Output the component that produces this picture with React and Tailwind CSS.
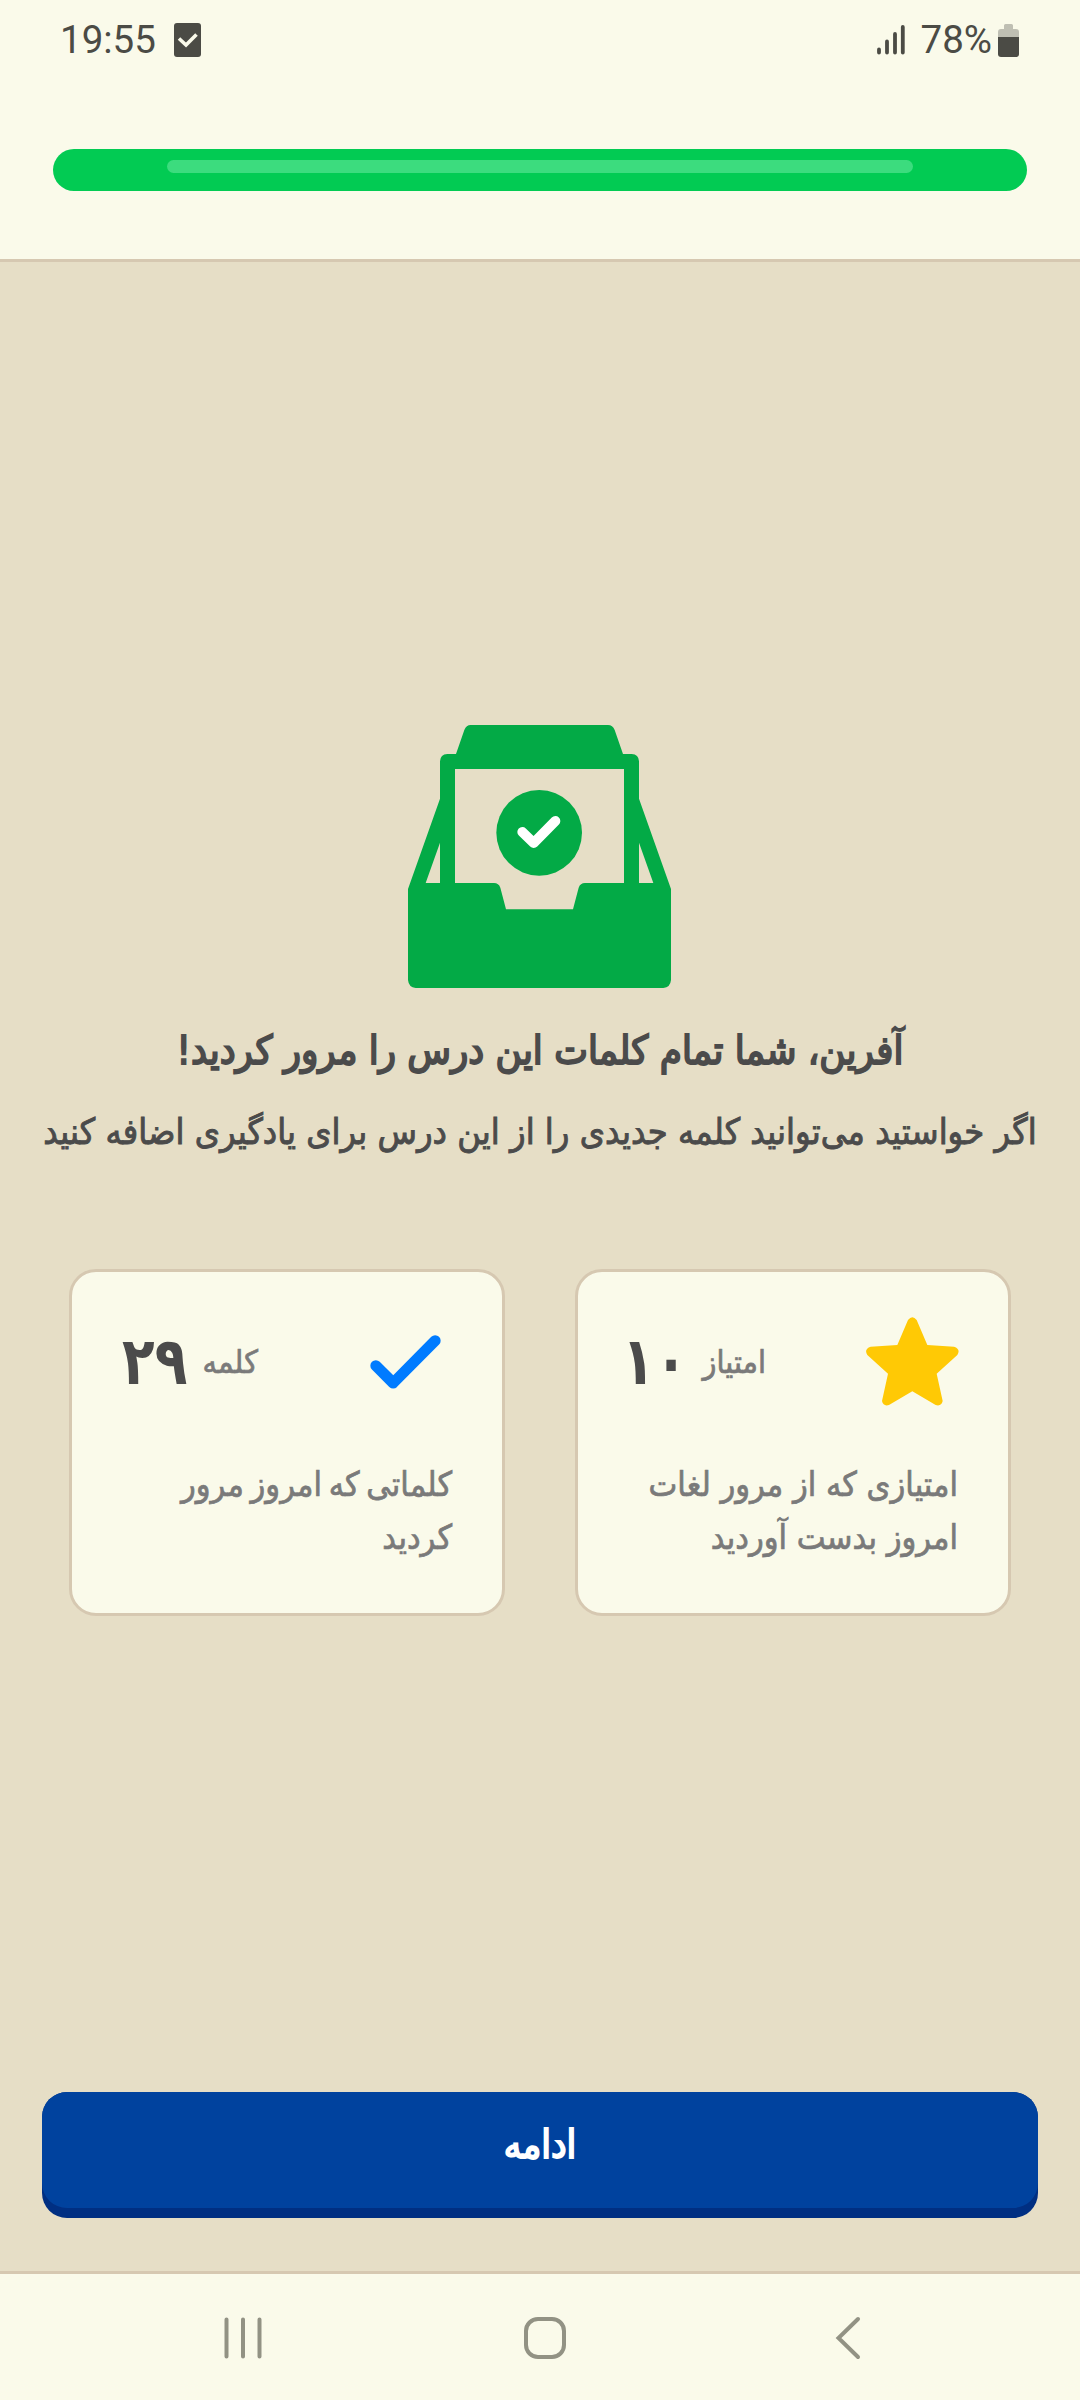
import React from 'react';

// Status bar and lesson progress
const Header = () => {
  return (
    <header className="h-[262px] border-b-[3px] border-[#d6c8b1] bg-[#fafaea]">
      <div className="h-[149px] flex items-start justify-between pl-[60px] pr-[61px] pt-[16px] text-[#4b4b45]">
        <div className="flex items-center gap-[18px]">
          <span className="text-[38.5px] leading-[48px]">19:55</span>
          <svg width="27" height="34" viewBox="0 0 27 34">
            <rect width="27" height="34" rx="3" fill="currentColor" />
            <path d="M5 15.5 L12 22 L22.5 11.5" fill="none" stroke="#fafaea" strokeWidth="3.6" />
          </svg>
        </div>
        <div className="flex items-center">
          <svg width="28" height="30" viewBox="0 0 28 30" className="mr-[16px]">
            <g stroke="currentColor" strokeWidth="3.8" strokeLinecap="round">
              <path d="M2 24.5V27.5M10 16.5V27.5M18 9V27.5M25.8 2V27.5" />
            </g>
          </svg>
          <span className="text-[38.5px] leading-[48px] mr-[6px]">78%</span>
          <svg width="21" height="33" viewBox="0 0 21 33">
            <path d="M6 1.5Q6 0 7.5 0h6Q15 0 15 1.5V5h3Q21 5 21 8v5H0V8Q0 5 3 5h3z" fill="#bfbfb3" />
            <path d="M0 13h21v17q0 3-3 3H3q-3 0-3-3z" fill="currentColor" />
          </svg>
        </div>
      </div>
      <div className="mx-[53px] h-[42px] rounded-full bg-[#02cb53] pt-[11px]">
        <div className="mx-[114px] h-[13px] rounded-full bg-[#3cdc7e]" />
      </div>
    </header>
  );
};

const TrayIcon = () => {
  return (
    <svg width="263" height="263" viewBox="54 45 789 789" className="mr-[1px]">
      <path
        fill="#03aa46"
        fillRule="evenodd"
        d="M242 45H654Q668 45 674 60L699 132H725Q746 133 747 154V266L843 537V810Q841 832 820 834H77Q56 832 54 810V537L150 266V154Q151 133 172 132H198L223 60Q229 45 242 45ZM195 177V519H312Q326 519 331 533L348 598H549L566 533Q571 519 585 519H702V177ZM150 398L107 519H150ZM747 398V519H790Z"
      />
      <circle cx="447.500" cy="368.500" r="128.500" fill="#03aa46" />
      <path d="M397 366L431 399L496 333" fill="none" stroke="#fff" strokeWidth="30" strokeLinecap="round" strokeLinejoin="round" />
    </svg>
  );
};

const StarIcon = () => {
  return (
    <svg width="93" height="89" viewBox="917 203 279 267" className="-mr-px -mt-[3px]">
      <path
        fill="#ffc905"
        d="M1043 212Q1056 196 1069 212L1101 287L1181 292Q1202 299 1191 317L1129 373L1147 455Q1143 472 1126 467L1056 426L986 467Q969 472 965 455L983 373L921 317Q910 299 931 292L1011 287Z"
      />
    </svg>
  );
};

const CheckIcon = () => {
  return (
    <svg width="71" height="54" viewBox="962 255 212 162" className="mr-[11px] -mt-[2px]">
      <path d="M979 347L1031 399L1157 272" fill="none" stroke="#007bff" strokeWidth="33" strokeLinecap="round" strokeLinejoin="round" />
    </svg>
  );
};

const StatCard = ({ icon, unit, value, valueClass, textClass, children }) => {
  return (
    <div className="w-[436px] h-[347px] rounded-[27px] border-[3px] border-[#d6c8b1] bg-[#fafaea] pt-[46px] pr-[50px] pl-[50px]">
      <div className="h-[90px] flex items-center justify-between">
        {icon}
        <div className="flex items-center gap-[8px]">
          <span className="text-[32px] leading-[60px] -mt-[3px] text-[#7a7a7a] [-webkit-text-stroke:0.7px]">{unit}</span>
          <span className={`-mt-[3px] text-[66px] leading-[60px] font-bold text-[#4b4b4b] origin-left scale-x-90 ${valueClass}`}>{value}</span>
        </div>
      </div>
      <p className={`mt-[50px] leading-[53px] text-[#7a7a7a] whitespace-nowrap [-webkit-text-stroke:0.7px] ${textClass}`}>{children}</p>
    </div>
  );
};

const NavBar = () => {
  return (
    <footer className="h-[129px] border-t-[3px] border-[#d6c8b1] bg-[#fafaea] flex items-start pt-[42px] pl-[223px]">
      <svg width="40" height="44" viewBox="0 0 40 44" className="mr-[259px]">
        <path d="M3.500 3.500V40.500M20 3.500V40.500M36.500 3.500V40.500" stroke="#929284" strokeWidth="4" strokeLinecap="round" />
      </svg>
      <svg width="44" height="44" viewBox="0 0 44 44" className="mr-[269px]">
        <rect x="4" y="3" width="38" height="38" rx="12" fill="none" stroke="#929284" strokeWidth="4" />
      </svg>
      <svg width="26" height="44" viewBox="0 0 26 44">
        <path d="M23 3L3.500 22L23 41" fill="none" stroke="#929284" strokeWidth="4" strokeLinecap="round" />
      </svg>
    </footer>
  );
};

const App = () => {
  return (
    <div className="w-[1080px] h-[2400px] flex flex-col overflow-hidden bg-[#e6dec6] font-[Roboto,'DejaVu_Sans',sans-serif]">
      <Header />
      <main dir="rtl" lang="fa" className="flex-1 flex flex-col items-center pt-[463px] font-['DejaVu_Sans_Condensed','DejaVu_Sans',sans-serif] font-stretch-semi-condensed">
        <TrayIcon />
        <h1 className="mt-[32px] text-[39.8px] leading-[60px] font-normal text-[#4b4b4b] whitespace-nowrap [-webkit-text-stroke:1.8px]">
          آفرین، شما تمام کلمات این درس را مرور کردید!
        </h1>
        <p className="mt-[22px] text-[35.9px] leading-[60px] text-[#4b4b4b] whitespace-nowrap [-webkit-text-stroke:0.9px]">
          اگر خواستید می‌توانید کلمه جدیدی را از این درس برای یادگیری اضافه کنید
        </p>
        <div className="mt-[107px] flex gap-[70px]">
          <StatCard icon={<StarIcon />} unit="امتیاز" value="۱۰" valueClass="tracking-[-7px] -ml-[6px]" textClass="text-[34px]">
            امتیازی که از مرور لغات<br />امروز بدست آوردید
          </StatCard>
          <StatCard icon={<CheckIcon />} unit="کلمه" value="۲۹" valueClass="tracking-normal" textClass="text-[34px] [word-spacing:-3px]">
            کلماتی که امروز مرور<br />کردید
          </StatCard>
        </div>
        <button className="mt-auto mb-[53px] w-[996px] h-[126px] rounded-[25px] bg-[#002f82] pb-[10px]">
          <span className="block h-[116px] rounded-[25px] bg-[#00429e] text-[39px] leading-[105px] font-normal text-white [-webkit-text-stroke:1.8px]">ادامه</span>
        </button>
      </main>
      <NavBar />
    </div>
  );
};

export default App;
